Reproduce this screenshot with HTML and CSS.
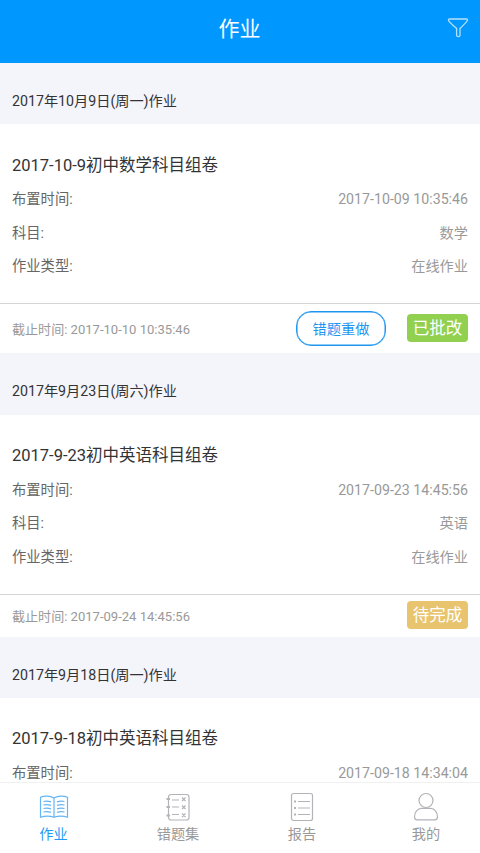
FILE: index.html
```html
<!DOCTYPE html>
<html lang="zh-CN">
<head>
<meta charset="utf-8">
<title>作业</title>
<link rel="stylesheet" href="styles.css">
</head>
<body>
<div class="app">
  <header class="topbar">
    <h1>作业</h1>
    <svg class="filter" width="22" height="20" viewBox="0 0 22 20"><path d="M2.600 1h16.800c1 0 1.400 1 .8 1.800-1.600 2.800-4.800 5-7.200 7.700v6.800c0 1.800-3.400 1.800-3.400 0v-6.800C7.200 7.800 3.200 5.600 1.700 2.800 1.200 2 1.600 1 2.600 1z"/></svg>
  </header>
  <main class="list">
    <h2 class="day">2017年10月9日(周一)作业</h2>
    <section class="card">
      <div class="info">
        <h3>2017-10-9初中数学科目组卷</h3>
        <p class="row"><span>布置时间:</span><span class="value">2017-10-09 10:35:46</span></p>
        <p class="row"><span>科目:</span><span class="value">数学</span></p>
        <p class="row"><span>作业类型:</span><span class="value">在线作业</span></p>
      </div>
      <div class="foot tall"><span class="deadline">截止时间: 2017-10-10 10:35:46</span><button class="redo">错题重做</button><span class="badge done">已批改</span></div>
    </section>
    <h2 class="day">2017年9月23日(周六)作业</h2>
    <section class="card">
      <div class="info">
        <h3>2017-9-23初中英语科目组卷</h3>
        <p class="row"><span>布置时间:</span><span class="value">2017-09-23 14:45:56</span></p>
        <p class="row"><span>科目:</span><span class="value">英语</span></p>
        <p class="row"><span>作业类型:</span><span class="value">在线作业</span></p>
      </div>
      <div class="foot"><span class="deadline">截止时间: 2017-09-24 14:45:56</span><span class="badge todo">待完成</span></div>
    </section>
    <h2 class="day">2017年9月18日(周一)作业</h2>
    <section class="card">
      <div class="info">
        <h3>2017-9-18初中英语科目组卷</h3>
        <p class="row"><span>布置时间:</span><span class="value">2017-09-18 14:34:04</span></p>
      </div>
    </section>
  </main>
  <nav class="tabs">
    <a class="tab active">
      <svg width="30" height="30" viewBox="0 0 30 30"><path d="M15 6C11 3.600 5 3.600 1.500 5.300v20c4-1.500 9.500-1.500 13.500 0 4-1.500 9.500-1.500 13.500 0v-20C25 3.600 19 3.600 15 6zM15 6v19"/><path d="M4.500 9.500c3-.6 5-.4 7.500.4M4.500 13c3-.6 5-.4 7.500.4M4.500 16.500c3-.6 5-.4 7.500.4M4.500 20c3-.6 5-.4 7.500.4M18 9.900c2.500-.8 4.500-1 7.500-.4M18 13.400c2.500-.8 4.500-1 7.500-.4M18 16.900c2.500-.8 4.500-1 7.500-.4M18 20.400c2.500-.8 4.500-1 7.500-.4"/></svg>
      <span>作业</span>
    </a>
    <a class="tab">
      <svg width="30" height="30" viewBox="0 0 30 30"><rect x="5.500" y="2.500" width="20.500" height="25.500" rx="2.500"/><path d="M3.500 7h3.500M3.500 15h3.500M3.500 23.500h3.500" stroke-width="2"/><path d="M9 8h7M9 15h7M9 22.500h7M19 5.500l3.500 3.500m0-3.500L19 9M19 13.500l3.500 3.500m0-3.500L19 17M19 21.500l3.500 3.500m0-3.500L19 25"/></svg>
      <span>错题集</span>
    </a>
    <a class="tab">
      <svg width="30" height="30" viewBox="0 0 30 30"><rect x="4.500" y="1.500" width="21" height="27" rx="2"/><path d="M11 9.500h12M11 16h12M11 22.500h12"/><path d="M7 9.500h2M7 16h2M7 22.500h2" stroke-width="2"/></svg>
      <span>报告</span>
    </a>
    <a class="tab">
      <svg width="30" height="30" viewBox="0 0 30 30"><circle cx="15" cy="8.500" r="7"/><path d="M10.500 16.300h9c4 0 7 4 7 8.500 0 2.200-.8 3-2.500 3H6c-1.700 0-2.500-.8-2.500-3 0-4.500 3-8.500 7-8.500z"/></svg>
      <span>我的</span>
    </a>
  </nav>
</div>
</body>
</html>
```
FILE: styles.css
```css
* { box-sizing: border-box; }
body {
  margin: 0;
  font-family: Roboto, "Noto Sans CJK SC", sans-serif;
  font-size: 14.3px;
  color: #333;
  background: #fff;
}
h1, h2, h3, p { margin: 0; font-weight: 400; }
.app { display: flex; flex-direction: column; height: 853px; overflow: hidden; }
.topbar {
  display: grid;
  grid-template-columns: 1fr auto 1fr;
  align-items: center;
  flex: none;
  height: 63px;
  padding: 0 11px 5px 10px;
  background: #0098ff;
  color: #fff;
}
.topbar h1 { grid-column: 2; font-size: 21px; line-height: 30px; }
.filter { justify-self: end; margin-bottom: 3px; fill: none; stroke: #b5e0ff; stroke-width: 1.3; }
.list { flex: 1; min-height: 0; overflow: hidden; }
.day {
  height: 61.250px;
  padding: 28px 12px 0;
  background: #f4f4fb;
  font-size: 14.2px;
  line-height: 20px;
}
.card { background: #fff; }
.info { height: 179px; padding: 29.500px 12px 0; }
.info h3 { font-size: 16.5px; line-height: 24px; margin-bottom: 5.500px; }
.row { display: flex; justify-content: space-between; height: 33.500px; line-height: 33.500px; color: #666; }
.value { color: #999; font-size: 14.2px; }
.foot {
  display: flex;
  align-items: center;
  height: 43px;
  padding: 0 12px 1px;
  border-top: 1px solid #d5d5d5;
}
.foot.tall { height: 50px; }
.deadline { margin-right: auto; font-size: 13.05px; color: #999; }
.redo {
  width: 90px;
  height: 35px;
  margin-right: 21px;
  padding: 0;
  border: 1px solid #1e96f0;
  box-shadow: inset 0 0 0 0.5px #1e96f0;
  border-radius: 15px;
  background: #fff;
  color: #1e96f0;
  font: inherit;
  font-size: 14.2px;
}
.badge {
  width: 61px;
  height: 28px;
  border-radius: 4px;
  color: #fff;
  font-size: 16.5px;
  line-height: 30px;
  text-align: center;
}
.done { background: #92d050; }
.todo { background: #e9c46e; }
.tabs {
  display: grid;
  grid-template-columns: 107px 142px 106px 142px;
  flex: none;
  height: 71px;
  border-top: 1px solid #f0f0f0;
  background: #fff;
}
.tab { display: flex; flex-direction: column; align-items: center; padding-top: 8.500px; color: #999; font-size: 14.2px; line-height: 20px; }
.tab svg { fill: none; stroke: #b3b3b8; stroke-width: 1.2; margin-bottom: 2.500px; }
.tab.active { color: #1e9bf5; }
.tab.active svg { stroke: #64b5f6; }
```
